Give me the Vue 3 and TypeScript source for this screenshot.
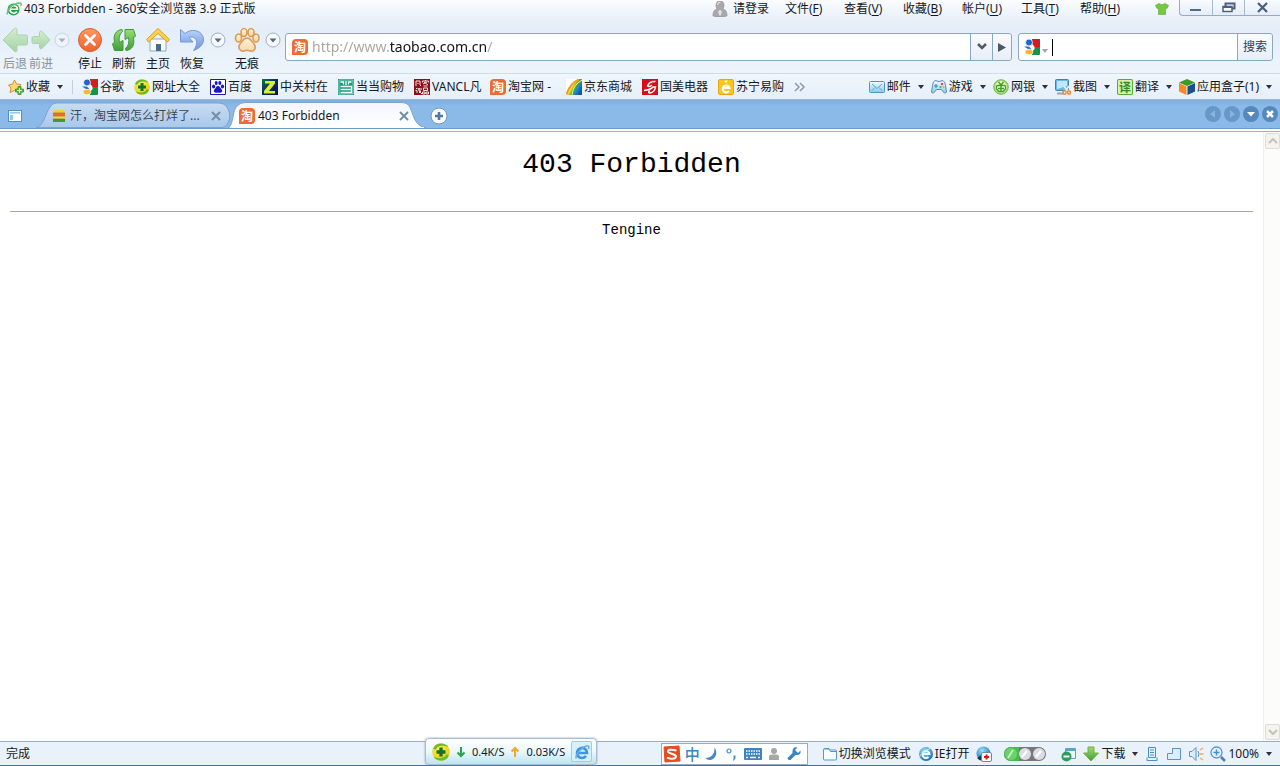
<script setup lang="ts">
import { ref } from 'vue'

interface Item { icon: string; label: string }
interface Menu { label: string; key: string }

const menus: Menu[] = [
  { label: '文件', key: 'F' },
  { label: '查看', key: 'V' },
  { label: '收藏', key: 'B' },
  { label: '帐户', key: 'U' },
  { label: '工具', key: 'T' },
  { label: '帮助', key: 'H' },
]
const bookmarks: Item[] = [
  { icon: 'google', label: '谷歌' },
  { icon: 'plus360', label: '网址大全' },
  { icon: 'baidu', label: '百度' },
  { icon: 'zol', label: '中关村在' },
  { icon: 'dangdang', label: '当当购物' },
  { icon: 'vancl', label: 'VANCL凡' },
  { icon: 'taobao', label: '淘宝网 -' },
  { icon: 'jd', label: '京东商城' },
  { icon: 'gome', label: '国美电器' },
  { icon: 'suning', label: '苏宁易购' },
]
const tools: Item[] = [
  { icon: 'mail', label: '邮件' },
  { icon: 'game', label: '游戏' },
  { icon: 'bank', label: '网银' },
  { icon: 'snip', label: '截图' },
  { icon: 'translate', label: '翻译' },
  { icon: 'cube', label: '应用盒子(1)' },
]
const actions: Item[] = [
  { icon: 'stop', label: '停止' },
  { icon: 'refresh', label: '刷新' },
  { icon: 'home', label: '主页' },
  { icon: 'undo', label: '恢复' },
]
const glyphs: Record<string, string> = { taobao: '淘', translate: '译' }
const url = ref('http://www.taobao.com.cn/')
const query = ref('')
</script>

<template>
  <svg class="sprite" width="0" height="0" aria-hidden="true">
    <defs>
      <linearGradient id="gGreen" x1="0" y1="0" x2="0" y2="1"><stop offset="0" stop-color="#9bdc74" /><stop offset="1" stop-color="#3f9e35" /></linearGradient>
      <linearGradient id="gPale" x1="0" y1="0" x2="0" y2="1"><stop offset="0" stop-color="#d3edcf" /><stop offset="1" stop-color="#a5d3a5" /></linearGradient>
      <linearGradient id="gStop" x1="0" y1="0" x2="0" y2="1"><stop offset="0" stop-color="#fb9a62" /><stop offset="1" stop-color="#f0602c" /></linearGradient>
      <linearGradient id="gBlue" x1="0" y1="0" x2="0" y2="1"><stop offset="0" stop-color="#b9d3f8" /><stop offset="1" stop-color="#6e93e0" /></linearGradient>
      <linearGradient id="gPaw" x1="0" y1="0" x2="0" y2="1"><stop offset="0" stop-color="#fff3dc" /><stop offset="1" stop-color="#fbd9a6" /></linearGradient>
      <linearGradient id="gZol" x1="0" y1="0" x2="1" y2="1"><stop offset="0" stop-color="#0a7a3c" /><stop offset="0.5" stop-color="#0b2a6c" /><stop offset="1" stop-color="#06164a" /></linearGradient>
      <linearGradient id="gJd" x1="0" y1="0" x2="1" y2="0.6"><stop offset="0.2" stop-color="#f8a51b" /><stop offset="0.45" stop-color="#ffe13a" /><stop offset="0.65" stop-color="#3aa655" /><stop offset="0.8" stop-color="#1a86d8" /><stop offset="1" stop-color="#0b57a8" /></linearGradient>
      <linearGradient id="gSky" x1="0" y1="0" x2="0" y2="1"><stop offset="0" stop-color="#f4fbff" /><stop offset="1" stop-color="#8cc8ee" /></linearGradient>
      <radialGradient id="gBall" cx="0.4" cy="0.3" r="0.7"><stop offset="0" stop-color="#9be2fb" /><stop offset="1" stop-color="#1672b8" /></radialGradient>
      <radialGradient id="gPlus" cx="0.4" cy="0.3" r="0.8"><stop offset="0" stop-color="#fff45a" /><stop offset="1" stop-color="#e6c400" /></radialGradient>
      <linearGradient id="gTabIdle" x1="0" y1="0" x2="0" y2="1"><stop offset="0" stop-color="#c9dcf2" /><stop offset="1" stop-color="#a9c8ea" /></linearGradient>
      <linearGradient id="gTabOn" x1="0" y1="0" x2="0" y2="1"><stop offset="0" stop-color="#f2f6fd" /><stop offset="1" stop-color="#ffffff" /></linearGradient>
    </defs>
    <symbol id="i-app" viewBox="0 0 16 16">
      <circle cx="7.500" cy="8.500" r="6" fill="#1fa548" /><path d="M4 8.300h7.500A3.700 3.700 0 0 0 4.200 7.500M4 8.500a3.700 3.700 0 0 0 6.800 2" fill="none" stroke="#fff" stroke-width="1.600" />
      <path d="M1.500 13.500C.5 8 8 1.500 14.500 2c1 .3.8 2 .2 3" fill="none" stroke="#5ac86e" stroke-width="1.500" />
    </symbol>
    <symbol id="i-back" viewBox="0 0 26 26"><path d="M1 13 12.500 1.500c1-.7 2.500 0 2.500 1V8h9c1 0 1.500.6 1.500 1.500v7c0 1-.6 1.500-1.500 1.500h-9v5.500c0 1-1.500 1.700-2.500 1z" fill="url(#gPale)" stroke="#a9d3ae" /></symbol>
    <symbol id="i-forward" viewBox="0 0 26 26"><path d="M22 13 14 4.500c-1-.8-2.500-.2-2.500 1V9.500h-6c-1 0-1.500.5-1.500 1.500v4c0 1 .5 1.500 1.500 1.500h6v4c0 1 1.500 1.800 2.500 1z" fill="url(#gPale)" stroke="#a9d3ae" /></symbol>
    <symbol id="i-stop" viewBox="0 0 26 26"><circle cx="13" cy="13" r="11.500" fill="url(#gStop)" stroke="#d9602f" /><path d="m8.500 8.500 9 9m0-9-9 9" stroke="#fff" stroke-width="2.800" stroke-linecap="round" /></symbol>
    <symbol id="i-refresh" viewBox="0 0 26 26">
      <path d="M11 2.500C5 3 2 8 3.500 15L1.500 17l2 6.500H12V13.500l-3.500 2C7.500 11 8.500 7 11.500 4.500z" fill="url(#gGreen)" stroke="#3f9a3a" stroke-linejoin="round" />
      <path d="M15 23.500c6-.5 9-5.500 7.500-12.500l2-2-2-6.500H14V12.500l3.500-2c1 4.500 0 8.500-3 11z" fill="url(#gGreen)" stroke="#3f9a3a" stroke-linejoin="round" />
    </symbol>
    <symbol id="i-home" viewBox="0 0 26 26"><path d="M5 12h16v12H5z" fill="#fafcfe" stroke="#93a4bb" /><path d="M11 17h5v7h-5z" fill="#496c88" /><path d="M13 1.500 1.500 12.500l2 2.500L13 6.500l9.500 8.500 2-2.500z" fill="#ffd24a" stroke="#d99b26" stroke-linejoin="round" /></symbol>
    <symbol id="i-undo" viewBox="0 0 26 26"><path d="M1.500 2.500V15H14l-4-4.500c4-2 9 1.500 7.500 7-.5 2-1.500 4-3 6 8-2.500 12-9 9-15C20.500 3 12 1.500 6 6.500z" fill="url(#gBlue)" stroke="#7796d3" stroke-linejoin="round" /></symbol>
    <symbol id="i-paw" viewBox="0 0 26 26"><g fill="url(#gPaw)" stroke="#dd9d57" stroke-width="1.700"><ellipse cx="4.500" cy="11" rx="3" ry="4" /><ellipse cx="10" cy="5.500" rx="3" ry="4" /><ellipse cx="17" cy="5.500" rx="3" ry="4" /><ellipse cx="22" cy="11" rx="3" ry="4" /><path d="M13 11c-4 0-5 4-7 6-3 4 1 8 4 7 2-1 4-1 6 0 4 1 7-3 4-7-2-2-3-6-7-6z" /></g></symbol>
    <symbol id="i-drop" viewBox="0 0 16 16"><circle cx="8" cy="8" r="7" fill="#f5f9fd" stroke="#a1afc2" /><path d="M4.500 6.500h7L8 10.500z" fill="#58677c" /></symbol>
    <symbol id="i-google" viewBox="0 0 16 16"><path d="M8 0h8v8H8z" fill="#d61c1c" /><path d="M8 8h8v7q0 1-1 1H8z" fill="#159447" /><path d="M0 7.500h5L8 11 4 10z" fill="#3168c8" /><circle cx="5" cy="3.500" r="3.500" fill="#2264c9" stroke="#fff" stroke-width=".8" /><ellipse cx="5" cy="13" rx="4" ry="2.800" fill="#f5b82e" stroke="#fff" stroke-width=".6" /><path d="M8 5q4 3 2 6l-2 1z" fill="#fff" /></symbol>
    <symbol id="i-plus360" viewBox="0 0 16 16"><circle cx="8" cy="8" r="7.800" fill="url(#gPlus)" /><path d="M1 5q2-5 8-4.500 4 .5 5.500 3Q9 1.500 5 3.500L3 6zM15 11q-2 5-8 4.500-4-.5-5.500-3 5.500 2 9.500 0l2-2.500z" fill="#6db92f" /><path d="M6.500 4h3v2.500H12v3H9.500V12h-3V9.500H4v-3h2.500z" fill="#157424" /></symbol>
    <symbol id="i-baidu" viewBox="0 0 16 16"><path d="M.5.5h15v15H.5z" fill="#fff" stroke="#1818b8" /><g fill="#1717c8"><ellipse cx="3.600" cy="7.500" rx="1.600" ry="2" /><ellipse cx="6.200" cy="4" rx="1.500" ry="2" /><ellipse cx="9.800" cy="4" rx="1.500" ry="2" /><ellipse cx="12.500" cy="7.500" rx="1.600" ry="2" /><path d="M8 7c-2 0-2 2-4 4-1 2 1 3.500 4 2.500 3 1 5-.5 4-2.500-2-2-2-4-4-4z" /></g></symbol>
    <symbol id="i-zol" viewBox="0 0 16 16"><path d="M0 0h16v16H0z" fill="url(#gZol)" /><path d="M3 2h10v2.500L7 12h6v2.500H2V12l6-7.500H3z" fill="#d6ef30" /></symbol>
    <symbol id="i-dangdang" viewBox="0 0 16 16"><path d="M0 0h16v16H0z" fill="#169b7c" /><path d="M1 1h14v14H1z" fill="none" stroke="#b9e4d6" stroke-width=".7" /><path d="M2.500 3h3v2.500M8 2v4m5.500-3h-3v2.500M2.500 7.500h11v6h-11M2.500 10.500h11" fill="none" stroke="#fff" stroke-width="1.300" /></symbol>
    <symbol id="i-vancl" viewBox="0 0 16 16"><path d="M0 0h16v16H0z" fill="#8f1018" /><path d="M2 7V2h4v4l1 1M3.500 4l1 1M8.500 3.500V2h6v1.500M11.500 1v1M9 5l4-2m-3 0 4 3M9.500 7h4M2 9.500h1.500m-2 2H3V14m1-4h4M5 9v3l3 3M5 12h2l-2 2M9.500 9h4v2.500h-4zM8.500 13h2.500v2H8.500zm3.500 0h2.500v2H12z" fill="none" stroke="#fff" stroke-width=".9" /></symbol>
    <symbol id="i-jd" viewBox="0 0 16 16"><path d="M0 0h16v16H0z" fill="#fff" /><path d="M1 16Q5 3 13 0h3v16z" fill="url(#gJd)" /><path d="M6 16Q7 6 16 1" fill="none" stroke="#fff35c" /><path d="M.5 15.500Q4 4 13 .5" fill="none" stroke="#f49b20" stroke-width="2" /></symbol>
    <symbol id="i-gome" viewBox="0 0 16 16"><path d="M0 0h16v16H0z" fill="#d80d1b" /><path d="M13.500 2.500C9 2 6.500 4.500 5.500 7q2 1.500 4.500-1M2 11.500c4-.5 7-1 9-3.500h2.500c-.5 3-2.500 5.500-5.500 6-2 0-1.500-2 0-2.500" fill="none" stroke="#fff" stroke-width="1.500" /></symbol>
    <symbol id="i-suning" viewBox="0 0 16 16"><rect x=".5" y=".5" width="15" height="15" rx="1.500" fill="#fdc51b" stroke="#e8a70a" /><path d="M4.500 9h7A3.500 3.500 0 1 0 11 12" fill="none" stroke="#fff" stroke-width="2" /><path d="M8 1v3M6.500 2.500h3" stroke="#fff" /></symbol>
    <symbol id="i-star" viewBox="0 0 16 16"><path d="m6.500 1 2 4 4.500.5-3 3.500.6 4.500-4.100-2-4.500 2 1-4.500L.5 6l4-.8z" fill="#ffdc73" stroke="#dc8b39" /><path d="M10 7.500h3v2.500h2.500v3H13v2.500h-3V13H7.500v-3H10z" fill="#5fb543" stroke="#377f2b" stroke-width=".7" /><path d="M11.500 9v5M9 11.500h5" stroke="#eaffdc" /></symbol>
    <symbol id="i-mail" viewBox="0 0 16 16"><rect x=".5" y="2.500" width="15" height="11" rx="1" fill="url(#gSky)" stroke="#4b9ac4" /><path d="m3 5 5 4.500L13 5M3 11.500l3-3m7 3-3-3" fill="none" stroke="#5aa5ce" /></symbol>
    <symbol id="i-game" viewBox="0 0 16 16"><path d="M4 1.500Q8 3.500 12 1.500q2 1 2.500 5L15.500 13q-1.500 3-5-2.500h-5Q2 16 .5 13l1-6.500Q2 2.500 4 1.500z" fill="url(#gSky)" stroke="#5789b8" /><path d="M5 5v4M3 7h4" stroke="#437fae" /><circle cx="11" cy="5" r="1.200" fill="#e04937" /><circle cx="12.500" cy="8" r="1" fill="#f3a929" /><circle cx="9.500" cy="8" r="1" fill="#4ba84b" /></symbol>
    <symbol id="i-bank" viewBox="0 0 16 16"><circle cx="8" cy="8" r="7.300" fill="#a7dc68" stroke="#75b94d" /><circle cx="8" cy="8" r="5.800" fill="#eeffdc" /><path d="m5.500 3 2.500 3 2.500-3M8 6v6.500M5 9.500h6M3.500 6.500h9M3.500 6.500V10l2.500 2.500h4l2.500-2.500V6.500" fill="none" stroke="#429c28" stroke-width="1.400" /></symbol>
    <symbol id="i-snip" viewBox="0 0 16 16"><rect x=".5" y=".5" width="13" height="11" rx="1" fill="#65b9ee" stroke="#3a82b6" /><path d="M2 2h10v5L2 10z" fill="#bee8ff" /><path d="M2 14.500h7" stroke="#91a6b7" stroke-width="2" /><path d="m9 7 4 6m1-6-4 6" stroke="#e8edf2" stroke-width="1.600" /><circle cx="9.500" cy="13.500" r="1.700" fill="none" stroke="#eb8a35" stroke-width="1.400" /><circle cx="14" cy="13.500" r="1.500" fill="none" stroke="#eb8a35" stroke-width="1.400" /></symbol>
    <symbol id="i-cube" viewBox="0 0 16 16"><path d="m8 0 8 3.500L8 7 0 3.500z" fill="#3f9a24" /><path d="m0 4 7.500 3.500V16L0 12.500z" fill="#f38a27" /><path d="M16 4 8.500 7.500V16l7.500-3.500z" fill="#164f94" /></symbol>
    <symbol id="i-lock" viewBox="0 0 16 16"><path d="M8 0C5 0 4 2 4 4.500c0 1.500.5 2.500 1 3.500-3 1-4 3-4 7q7 2 14 0c0-4-1-6-4-7 .5-1 1-2 1-3.500C12 2 11 0 8 0z" fill="#a9a9ab" stroke="#929296" stroke-width=".7" /><path d="M5.500 4q0-3 3-3M8 9l-1.500 2L8 14.500l1.500-3.500z" fill="#e1e1e3" stroke="#e1e1e3" /></symbol>
    <symbol id="i-shirt" viewBox="0 0 14 12"><path d="M4 .5q3 2.500 6 0l3.500 2L12 5.500l-1.500-.5v6.500h-7V5L2 5.500.5 2.500z" fill="#74c943" stroke="#65af3c" stroke-width=".7" /></symbol>
    <symbol id="i-page" viewBox="0 0 16 16"><path d="M3 2h10l1 3H2z" fill="#f6cf3c" /><path d="M2 5h12v3H2z" fill="#e87430" /><path d="M2 8h12v3H2z" fill="#f3d25a" /><path d="M2 11h12v3H2z" fill="#41993a" /><path d="M2 5h12M2 8h12M2 11h12" stroke="#91642a" stroke-width=".6" /></symbol>
    <symbol id="i-panel" viewBox="0 0 16 14"><rect x="1.500" y="1.500" width="13" height="11" fill="#fff" stroke="#4f91c7" /><path d="M3 3h10v1.500H3zM3 6h3v5H3z" fill="#8fcbe8" /></symbol>
    <symbol id="i-close" viewBox="0 0 10 10"><path d="m1 1 8 8m0-8L1 9" stroke="#718ca7" stroke-width="1.900" /></symbol>
    <symbol id="i-add" viewBox="0 0 18 18"><circle cx="9" cy="9" r="8" fill="#f9fbfe" stroke="#7298ba" /><path d="M9 5v8M5 9h8" stroke="#56789a" stroke-width="2.600" /></symbol>
    <symbol id="i-ie" viewBox="0 0 16 16"><circle cx="8" cy="8" r="7" fill="url(#gBall)" /><path d="M4.500 8h7a3.500 3.500 0 1 0-1 3" fill="none" stroke="#fff" stroke-width="1.800" /><path d="M1 13Q2 6 13.500 2" fill="none" stroke="#bcecff" /></symbol>
    <symbol id="i-eblue" viewBox="0 0 16 16"><path d="M4 9h9a5 5 0 1 0-1 3" fill="none" stroke="#3d96df" stroke-width="2.700" /><path d="M2.500 14.500C0 12 9 1 14 2q1.500.5.500 3" fill="none" stroke="#62aee9" stroke-width="1.500" /></symbol>
    <symbol id="i-doctor" viewBox="0 0 16 16"><circle cx="7.500" cy="7.500" r="7" fill="url(#gBall)" /><path d="M1 12A7.500 7.500 0 0 0 8 15V7z" fill="#063a66" /><rect x="5.500" y="6.500" width="10" height="9" rx="1.500" fill="#fff" stroke="#738798" /><path d="M10.500 8.500v5M8 11h5" stroke="#d71919" stroke-width="2" /></symbol>
    <symbol id="i-window" viewBox="0 0 16 16"><path d="M1.500 13V3.500q0-1 1-1H7L8.500 4h5q1 0 1 1v8q0 1-1 1h-11q-1 0-1-1z" fill="#f5fcff" stroke="#5797c9" /><path d="M2 3h5l1.500 2.500H14" stroke="#5797c9" fill="none" /></symbol>
    <symbol id="i-lights" viewBox="0 0 42 14"><rect width="42" height="14" rx="7" fill="#77757d" /><path d="M7 0h8v14H7A7 7 0 0 1 7 0z" fill="#49ba51" /><circle cx="7" cy="7" r="6" fill="#6bd36d" /><path d="m4 11 5-8" stroke="#d4f5cc" stroke-width="1.500" /><circle cx="21" cy="7" r="6" fill="#dcdde2" /><circle cx="35" cy="7" r="6" fill="#dcdde2" /><path d="m18 10 5-6m9 6 5-6" stroke="#fff" stroke-width="2" /></symbol>
    <symbol id="i-block" viewBox="0 0 16 16"><path d="M4.500 2.500h10v10h-10z" fill="#eafaff" stroke="#56a6c6" /><path d="M4 4h11" stroke="#56a6c6" stroke-width="2" /><circle cx="5.500" cy="10.500" r="5" fill="#2e9c5b" /><path d="M2.500 10.500h6" stroke="#fff" stroke-width="2" /></symbol>
    <symbol id="i-down" viewBox="0 0 16 16"><path d="M5 1h6v6h4.500L8 15 .5 7H5z" fill="url(#gGreen)" stroke="#79ad3b" /></symbol>
    <symbol id="i-scroll" viewBox="0 0 16 16"><path d="M4.500 1.500h7v10h-7zM3 14.500h10M3 11.500v3m10-3v3M6 4h4M6 6.500h4M6 9h4" fill="#dff3ff" stroke="#4b8fca" /></symbol>
    <symbol id="i-split" viewBox="0 0 16 16"><path d="M6.500 2.500h8v11h-13v-6h5z" fill="#dceefb" stroke="#5795c8" /></symbol>
    <symbol id="i-sound" viewBox="0 0 16 16"><path d="M1.500 5.500H4l4-4v13l-4-4H1.500z" fill="#dceefb" stroke="#5795c8" /><path d="m12 4 3-2m-3 6h3.500M12 12l3 2" stroke="#e9ae59" stroke-width="1.400" /><path d="M10 5q2 3 0 6" fill="none" stroke="#5795c8" /></symbol>
    <symbol id="i-zoom" viewBox="0 0 16 16"><circle cx="6.500" cy="6.500" r="5.500" fill="#e2f5ff" stroke="#5a93cf" stroke-width="1.300" /><path d="M6.500 3.500v6m-3-3h6" stroke="#4b8bd0" stroke-width="1.500" /><path d="m11 11 4 4" stroke="#507cae" stroke-width="2.500" /></symbol>
    <symbol id="i-sogou" viewBox="0 0 18 18"><path d="M1 2 16 1l1 15-15 1z" fill="#e84c1c" stroke="#e84c1c" stroke-linejoin="round" /><path d="M13.500 5.500Q5 3.500 5 6.500C5 9 13 8.500 13 11.500 13 14.500 6 14 4 12.500" fill="none" stroke="#fff" stroke-width="2" /></symbol>
    <symbol id="i-moon" viewBox="0 0 16 16"><path d="M10.500 1.500c4 5 1 12.500-5 12.500Q3 14 1.500 12C7 12 11 8 10.500 1.500z" fill="#4389c8" /></symbol>
    <symbol id="i-punct" viewBox="0 0 16 16"><circle cx="5" cy="5" r="2" fill="none" stroke="#4389c8" stroke-width="1.200" /><path d="M9.500 9.500h2v2.500l-1.500 2.500H9l.7-2.500z" fill="#4389c8" /></symbol>
    <symbol id="i-keys" viewBox="0 0 18 14"><rect x="0" y="1" width="18" height="12" rx="1" fill="#3c83c4" /><path d="M2 4h14M2 7h14" stroke="#fff" stroke-width="1.500" stroke-dasharray="1.500 1" /><path d="M2 10.500h2m2 0h6m2 0h2" stroke="#fff" stroke-width="1.500" /></symbol>
    <symbol id="i-person" viewBox="0 0 16 16"><circle cx="8" cy="5" r="3" fill="#a7a7a7" /><path d="M3 14V11q0-2.500 2.500-2.500h5Q13 8.500 13 11v3z" fill="#a7a7a7" /></symbol>
    <symbol id="i-wrench" viewBox="0 0 16 16"><path d="M14.500 4.500 12 7 9 4l2.500-2.500Q7 .5 6.500 5v2l-5 5q0 2.500 3 2l5-5q6 .5 5-4.500z" fill="#3c83c4" /></symbol>
    <symbol id="i-arrdown" viewBox="0 0 10 12"><path d="M5 1v9M1.500 6.500 5 10l3.500-3.500" fill="none" stroke="#28a149" stroke-width="2" /></symbol>
    <symbol id="i-arrup" viewBox="0 0 10 12"><path d="M5 11V2M1.500 5.500 5 2l3.500 3.500" fill="none" stroke="#f4a728" stroke-width="2" /></symbol>
  </svg>

  <div class="browser">
    <header class="titlebar">
      <svg class="i16"><use href="#i-app" /></svg>
      <span class="title">403 Forbidden - 360安全浏览器 3.9 正式版</span>
      <button class="login"><svg class="i16"><use href="#i-lock" /></svg>请登录</button>
      <nav class="menus">
        <button v-for="m in menus" :key="m.key">{{ m.label }}(<u>{{ m.key }}</u>)</button>
      </nav>
      <button class="skin" aria-label="皮肤"><svg class="shirt"><use href="#i-shirt" /></svg></button>
      <div class="wincontrols">
        <button aria-label="最小化"><svg width="12" height="14"><path d="M0 9h11" stroke="#526b86" stroke-width="2" /></svg></button>
        <button aria-label="还原"><svg width="14" height="14"><path d="M3.500 5V2.500h9v5H10" fill="none" stroke="#47617f" stroke-width="2" /><path d="M1 5.500h9v5H1z" fill="#fff" stroke="#47617f" stroke-width="1.500" /><path d="M1 6h9" stroke="#47617f" stroke-width="2" /></svg></button>
        <button aria-label="关闭"><svg width="12" height="14"><path d="m1 2 9 9m0-9-9 9" stroke="#47617f" stroke-width="2.300" /></svg></button>
      </div>
    </header>

    <div class="toolbar">
      <div class="history">
        <button class="tool off"><svg><use href="#i-back" /></svg>后退</button>
        <button class="tool off"><svg><use href="#i-forward" /></svg>前进</button>
        <button class="circle faded" aria-label="历史"><svg class="i16"><use href="#i-drop" /></svg></button>
      </div>
      <div class="actions">
        <button v-for="a in actions" :key="a.icon" class="tool"><svg><use :href="'#i-' + a.icon" /></svg>{{ a.label }}</button>
      </div>
      <button class="circle" aria-label="恢复列表"><svg class="i16"><use href="#i-drop" /></svg></button>
      <button class="tool"><svg><use href="#i-paw" /></svg>无痕</button>
      <button class="circle" aria-label="无痕选项"><svg class="i16"><use href="#i-drop" /></svg></button>
      <div class="field address">
        <span class="glyph taobao">淘</span>
        <input v-model="url" class="url" type="text" aria-label="地址" spellcheck="false">
        <button class="narrow" aria-label="地址列表"><svg width="12" height="8"><path d="m2 1 4 4 4-4" fill="none" stroke="#4c5a6c" stroke-width="2.500" /></svg></button>
        <button class="narrow last" aria-label="转到"><svg width="8" height="9"><path d="m0 0 8 4.500L0 9z" fill="#4a5768" /></svg></button>
      </div>
      <div class="field search">
        <svg class="i16"><use href="#i-google" /></svg>
        <svg class="tiny" width="6" height="4"><path d="M0 0h6L3 4z" fill="#a4a6aa" /></svg>
        <span class="caret"></span>
        <input v-model="query" type="text" aria-label="搜索内容">
        <button class="go">搜索</button>
      </div>
    </div>

    <nav class="bookmarks">
      <button class="fav"><svg class="i16"><use href="#i-star" /></svg>收藏<i class="tri"></i></button>
      <span class="sep"></span>
      <div class="links">
        <a v-for="b in bookmarks" :key="b.icon" href="#">
          <span v-if="glyphs[b.icon]" class="glyph" :class="b.icon">{{ glyphs[b.icon] }}</span>
          <svg v-else class="i16"><use :href="'#i-' + b.icon" /></svg>
          <span :class="{ four: b.label.length > 2 }">{{ b.label }}</span>
        </a>
        <button aria-label="更多"><svg width="12" height="10"><path d="m1 1 4 4-4 4m5-8 4 4-4 4" fill="none" stroke="#8d99a8" stroke-width="1.500" /></svg></button>
      </div>
      <div class="plugins">
        <button v-for="t in tools" :key="t.icon">
          <span v-if="glyphs[t.icon]" class="glyph" :class="t.icon">{{ glyphs[t.icon] }}</span>
          <svg v-else class="i16"><use :href="'#i-' + t.icon" /></svg>
          {{ t.label }}<i class="tri"></i>
        </button>
      </div>
    </nav>

    <div class="tabbar">
      <button class="panel" aria-label="侧边栏"><svg width="16" height="14"><use href="#i-panel" /></svg></button>
      <div class="tab">
        <svg class="shape" viewBox="0 0 198 26" preserveAspectRatio="none"><path d="M0 25.500C8 24 9 12 14 5q2-4 7-4h162q5 0 8 4 5 8 1 16-2 4.500-7 4.500z" fill="url(#gTabIdle)" stroke="#7ba3cc" /></svg>
        <svg class="i16"><use href="#i-page" /></svg>
        <span>汗，淘宝网怎么打烊了...</span>
        <button aria-label="关闭标签"><svg width="10" height="10"><use href="#i-close" /></svg></button>
      </div>
      <div class="tab on">
        <svg class="shape" viewBox="0 0 198 26" preserveAspectRatio="none"><path d="M0 26C6 23 4 8 9 4q3-3.500 8-3.500h156q7 0 9 5c4 8 4 18 16 20.500z" fill="url(#gTabOn)" stroke="#7ba3cc" /><path d="M2 25.500h194" stroke="#fff" /></svg>
        <span class="glyph taobao">淘</span>
        <span class="name">403 Forbidden</span>
        <button aria-label="关闭标签"><svg width="10" height="10"><use href="#i-close" /></svg></button>
      </div>
      <button class="add" aria-label="新标签"><svg width="18" height="18"><use href="#i-add" /></svg></button>
      <div class="tabnav">
        <button aria-label="向左"><svg class="i16" viewBox="0 0 16 16"><circle cx="8" cy="8" r="8" fill="#6599ca" /><path d="m10 4-5 4 5 4z" fill="#87b3dd" /></svg></button>
        <button aria-label="向右"><svg class="i16" viewBox="0 0 16 16"><circle cx="8" cy="8" r="8" fill="#6599ca" /><path d="m6 4 5 4-5 4z" fill="#87b3dd" /></svg></button>
        <button aria-label="标签列表"><svg class="i16" viewBox="0 0 16 16"><circle cx="8" cy="8" r="8" fill="#5689bb" /><path d="M4 6h8l-4 4.500z" fill="#fff" /></svg></button>
        <button aria-label="关闭全部"><svg class="i16" viewBox="0 0 16 16"><circle cx="8" cy="8" r="8" fill="#5689bb" /><path d="m5 5 6 6m0-6-6 6" stroke="#fff" stroke-width="2.500" /></svg></button>
      </div>
    </div>

    <div class="viewport">
      <main>
        <h1>403 Forbidden</h1>
        <hr>
        <p>Tengine</p>
      </main>
      <div class="scrollbar">
        <button aria-label="向上滚动"><svg width="10" height="6"><path d="m1 5 4-4 4 4" fill="none" stroke="#c4c3bb" stroke-width="2" /></svg></button>
        <button aria-label="向下滚动"><svg width="10" height="6"><path d="m1 1 4 4 4-4" fill="none" stroke="#c4c3bb" stroke-width="2" /></svg></button>
      </div>
    </div>

    <footer class="status">
      <span class="done">完成</span>
      <div class="speed">
        <svg width="18" height="18"><use href="#i-plus360" /></svg>
        <svg width="10" height="12"><use href="#i-arrdown" /></svg>
        <span>0.4K/S</span>
        <svg width="10" height="12"><use href="#i-arrup" /></svg>
        <span>0.03K/S</span>
        <button aria-label="浏览器"><svg class="i16"><use href="#i-eblue" /></svg></button>
      </div>
      <div class="ime">
        <svg width="18" height="18"><use href="#i-sogou" /></svg>
        <span class="zh">中</span>
        <svg class="i16"><use href="#i-moon" /></svg>
        <svg class="i16"><use href="#i-punct" /></svg>
        <svg width="18" height="14"><use href="#i-keys" /></svg>
        <svg class="i16"><use href="#i-person" /></svg>
        <svg class="i16"><use href="#i-wrench" /></svg>
      </div>
      <div class="modes">
        <button><svg class="i16"><use href="#i-window" /></svg>切换浏览模式</button>
        <button><svg class="i16"><use href="#i-ie" /></svg>IE打开</button>
        <button aria-label="浏览器医生"><svg class="i16"><use href="#i-doctor" /></svg></button>
      </div>
      <svg class="lights" width="42" height="14"><use href="#i-lights" /></svg>
      <div class="tray">
        <button aria-label="拦截"><svg class="i16"><use href="#i-block" /></svg></button>
        <button><svg class="i16"><use href="#i-down" /></svg>下载<i class="tri"></i></button>
        <button aria-label="滚动"><svg class="i16"><use href="#i-scroll" /></svg></button>
        <button aria-label="分屏"><svg class="i16"><use href="#i-split" /></svg></button>
        <button aria-label="声音"><svg class="i16"><use href="#i-sound" /></svg></button>
        <button><svg class="i16"><use href="#i-zoom" /></svg>100%<i class="tri"></i></button>
      </div>
    </footer>
  </div>
</template>

<style>
body { margin: 0; }
</style>

<style scoped>
.sprite { position: absolute; }
.browser {
  display: flex;
  flex-direction: column;
  min-height: 100vh;
  overflow: hidden;
  font: 12px/16px "Noto Sans", "Noto Sans CJK SC", sans-serif;
  color: #15181c;
  background: #fff;
}
.browser *, .browser { box-sizing: border-box; }
button {
  display: flex;
  align-items: center;
  flex: none;
  padding: 0;
  border: 0;
  background: none;
  font: inherit;
  color: inherit;
  white-space: nowrap;
}
input {
  flex: 1;
  min-width: 0;
  padding: 0;
  border: 0;
  outline: 0;
  background: none;
}
svg { display: block; flex: none; }
.i16 { width: 16px; height: 16px; }
.tri {
  margin-left: 7px;
  border: 3px solid transparent;
  border-top: 4px solid #2d3238;
  border-bottom: 0;
}
.glyph {
  flex: none;
  width: 16px;
  height: 16px;
  font: 700 12px/16px "Noto Sans CJK SC", sans-serif;
  text-align: center;
}
.taobao { border-radius: 4px 4px 4px 0; color: #fff; background: #ee6b35; }
.translate { border-radius: 2px; color: #3b8c28; background: #d5f2b2; box-shadow: inset 0 0 0 1px #5ba83b; }

.titlebar {
  display: flex;
  height: 20px;
  padding: 1px 0 0 6px;
  background: linear-gradient(#fafcff, #e8f0fa);
}
.titlebar > .i16 { margin-right: 2px; }
.title { flex: 1; white-space: nowrap; }
.titlebar button { height: 16px; }
.login { gap: 5px; margin-right: 16px; }
.menus { display: grid; grid-template-columns: repeat(6, 59px); margin-right: 16px; }
u { text-underline-offset: 2px; }
.shirt { width: 14px; height: 12px; }
.wincontrols {
  display: grid;
  grid-template-columns: 33px 32px 35px;
  height: 16px;
  margin: -1px 0 0 10px;
  border: 1px solid #92abc8;
  border-top: 0;
  border-right: 0;
  border-radius: 0 0 0 4px;
  background: linear-gradient(#f8fbff, #e6edf8);
}
.wincontrols button { height: 15px; justify-content: center; border-right: 1px solid #a6bad2; }
.wincontrols button:last-child { border: 0; }

.toolbar {
  display: flex;
  align-items: flex-start;
  height: 53px;
  padding: 7px 7px 0 2px;
  background: linear-gradient(#e8f0fa, #e4eef9 20%, #edf4fb);
}
.tool { flex-direction: column; gap: 3px; width: 26px; }
.tool svg { width: 26px; height: 26px; }
.off { color: #8b9299; }
.history { display: flex; margin-right: 7px; }
.actions { display: flex; gap: 8px; }
.circle { height: 26px; margin: 0 8px 0 5px; }
.history .circle { margin: 0; }
.circle + .field { margin-left: -4px; }
.faded { opacity: .45; }
.field {
  display: flex;
  align-items: center;
  height: 28px;
  margin-top: 6px;
  padding-left: 6px;
  border: 1px solid #89a9c1;
  border-radius: 3px;
  background: #fff;
}
.address { flex: 1; gap: 4px; margin-right: 6px; }
.url {
  height: 24px;
  font: 14px/24px "Noto Sans", sans-serif;
  color: transparent;
  background: linear-gradient(90deg, #a9a49c 78px, #111 78px, #111 174px, #a9a49c 174px);
  background-clip: text;
  -webkit-background-clip: text;
}
.narrow {
  align-self: stretch;
  justify-content: center;
  width: 22px;
  border-left: 1px solid #89a9c1;
  background: linear-gradient(#fafbff, #e8edf7);
}
.last { width: 19px; margin-left: -4px; border-radius: 0 3px 3px 0; }
.search { width: 255px; padding-left: 5px; }
.tiny { margin: 8px 2px 0; }
.caret { width: 1px; height: 17px; margin-left: 2px; background: #000; }
.go {
  align-self: stretch;
  justify-content: center;
  width: 35px;
  border-left: 1px solid #89a9c1;
  border-radius: 0 3px 3px 0;
  color: #27415e;
  background: linear-gradient(#fafbff, #e8edf7);
}

.bookmarks {
  display: flex;
  align-items: center;
  height: 27px;
  padding: 0 8px;
  border-top: 1px solid #cadeeb;
  border-bottom: 1px solid #9db9d2;
  background: linear-gradient(#eff6fc, #e6effa);
}
.fav { gap: 2px; }
.fav .tri { margin-left: 5px; }
.sep { width: 1px; height: 14px; margin: 0 9px; background: #c2ceda; }
.links { display: flex; flex: 1; gap: 10px; }
.links a { display: flex; gap: 2px; color: inherit; text-decoration: none; white-space: nowrap; }
.four { width: 48px; }
.plugins { display: flex; gap: 7px; }
.plugins .i16, .plugins .glyph { margin-right: 2px; }

.tabbar {
  display: flex;
  align-items: flex-end;
  height: 32px;
  padding: 0 2px 3px 7px;
  border-bottom: 1px solid #a5b1c1;
  background: linear-gradient(#7eaedf, #8bb9e8 20%, #8bb9e8 28px, #6e9cc9 28px, #6e9cc9 29px, #fff 29px);
}
.panel, .add { height: 25px; }
.tab {
  position: relative;
  display: flex;
  align-items: center;
  width: 192px;
  height: 26px;
  margin-left: 13px;
  padding: 1px 7px 0 15px;
  color: #3a4654;
}
.shape { position: absolute; inset: 0; width: 198px; height: 26px; }
.tab > :not(.shape) { position: relative; }
.tab > span:not(.glyph) { flex: 1; margin-left: 3px; white-space: nowrap; }
.on { z-index: 1; width: 198px; margin-left: 0; padding: 1px 17px 0 11px; color: #15181c; }
.add { margin-left: 4px; }
.tabnav { display: flex; gap: 3px; height: 28px; margin-left: auto; }

.viewport { display: flex; flex: 1; }
main { flex: 1; padding: 0 10px; text-align: center; color: #000; }
h1 { margin: 17px 0 30px; font: 28px/32px "Liberation Mono", monospace; }
hr { height: 1px; margin: 0; border: 0; background: #aca899; }
main p { margin: 8px 0 0; font: 14px/20px "Liberation Mono", monospace; }
.scrollbar {
  display: flex;
  flex-direction: column;
  justify-content: space-between;
  width: 17px;
  padding: 1px;
  border-left: 1px solid #f1f0ed;
  background: #fcfcfb;
}
.scrollbar button {
  justify-content: center;
  width: 15px;
  height: 16px;
  border: 1px solid #dedcd3;
  border-radius: 2px;
  background: #f4f3ee;
}

.status {
  position: relative;
  display: flex;
  align-items: center;
  height: 25px;
  padding: 0 8px 0 6px;
  border-top: 1px solid #9badc4;
  border-bottom: 1px solid #3d70a8;
  background: #e9f1fb;
}
.done { flex: 1; }
.speed {
  position: absolute;
  left: 425px;
  bottom: 0;
  display: flex;
  align-items: center;
  gap: 6px;
  height: 27px;
  padding: 0 4px 0 6px;
  border: 1px solid #a9bdd0;
  border-radius: 4px;
  font-size: 11px;
  background: linear-gradient(#fff, #eaf7fb 50%, #bce5f0);
  box-shadow: 0 0 2px #7d96ad;
}
.speed button { width: 21px; height: 21px; justify-content: center; border: 1px solid #9fcbe4; border-radius: 2px; background: #d8f0fb; }
.ime {
  display: flex;
  align-items: center;
  gap: 4px;
  height: 22px;
  padding: 0 5px 0 1px;
  margin-right: 14px;
  border: 1px solid #9aabc0;
  background: #fff;
}
.zh { font-size: 15px; font-weight: 500; color: #3c83c4; }
.modes { display: flex; gap: 7px; margin-right: 12px; }
.modes button { gap: 1px; }
.lights { margin-right: 15px; }
.tray { display: flex; gap: 6px; }
.tray button { gap: 2px; }
.tray .tri { margin-left: 5px; }
</style>
